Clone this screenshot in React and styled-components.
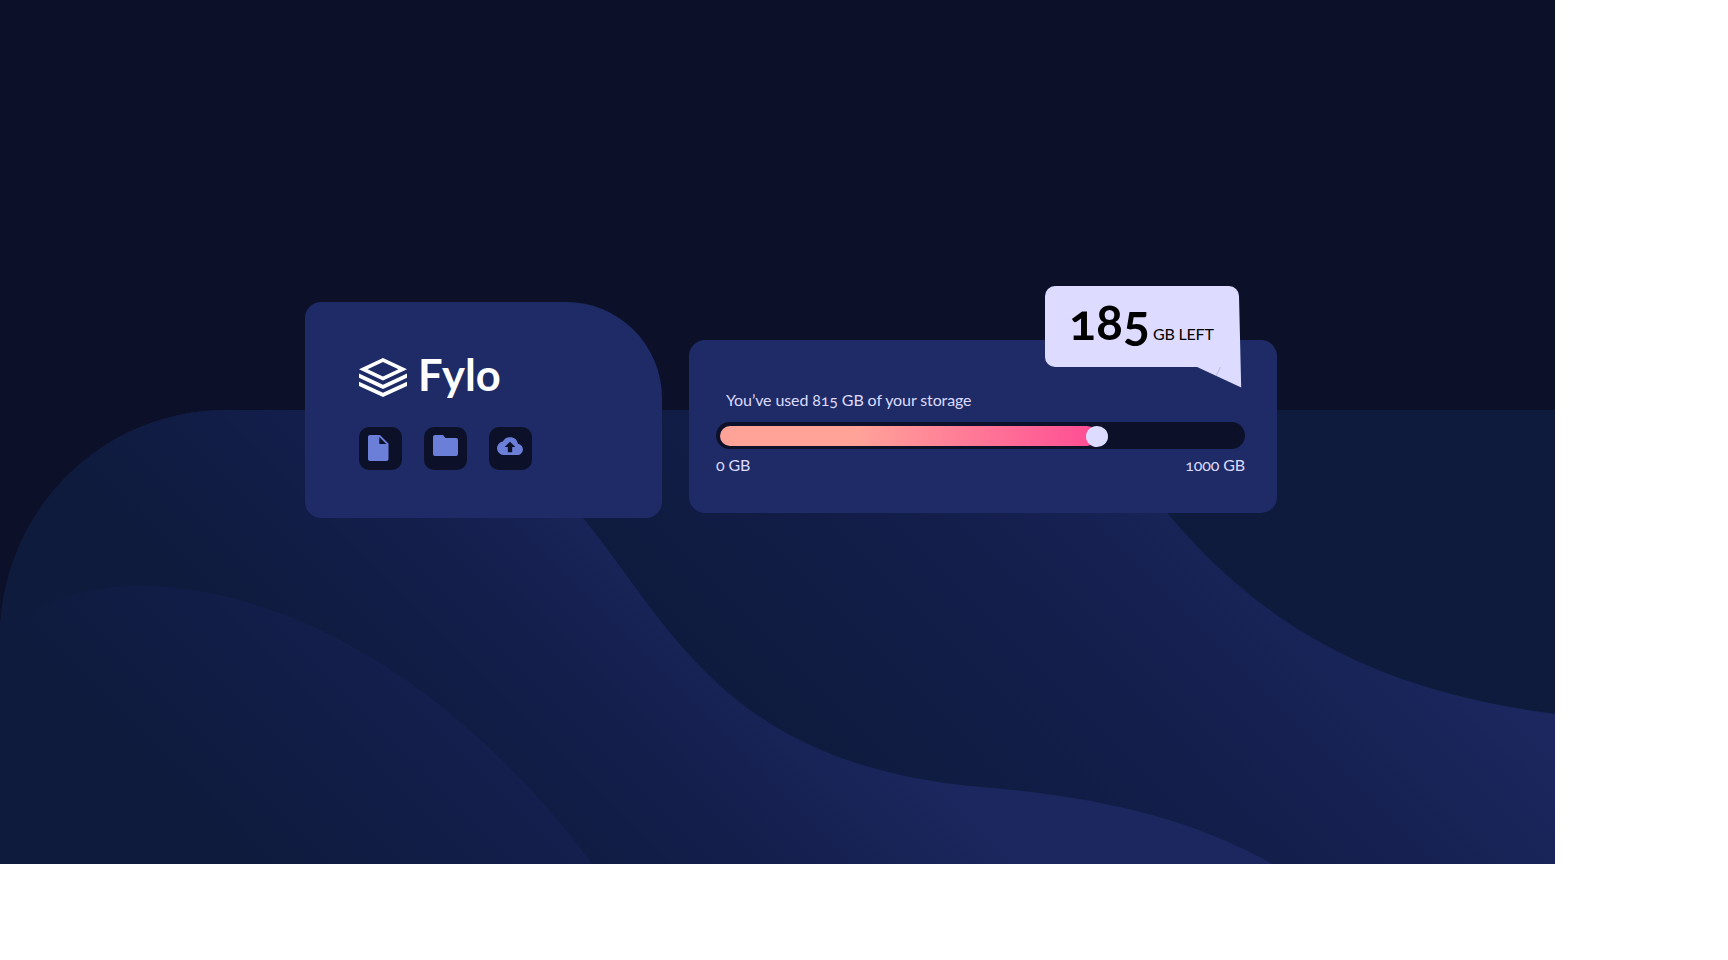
import React from 'react';
import styled, { createGlobalStyle } from 'styled-components';

const GlobalStyle = createGlobalStyle`
  * { box-sizing: border-box; }
  body { margin: 0; background: #fff; }
`;

const Page = styled.div`
  position: relative;
  width: 1555px;
  height: 864px;
  overflow: hidden;
  background: #0c1129;
  font-family: 'Lato', sans-serif;
  font-variant-numeric: oldstyle-nums;
  font-size: 16px;
  line-height: 20px;
  color: #dddbff;
`;

const Waves = styled.svg`
  position: absolute;
  left: 0;
  bottom: 0;
  width: 1555px;
  height: 454px;
`;

const Main = styled.main`
  position: relative;
  display: flex;
  align-items: flex-start;
  gap: 27px;
  padding: 302px 0 0 305px;
`;

const Card = styled.section`
  width: 357px;
  height: 216px;
  padding: 54px;
  border-radius: 16px 96px 16px 16px;
  background: #1e2b66;
`;

const Logo = styled.div`
  display: flex;
  align-items: flex-start;
  gap: 11px;
  height: 71px;
  padding-top: 2px;
`;

const LogoName = styled.span`
  margin-top: -6px;
  font-size: 43.5px;
  font-weight: 700;
  line-height: 44px;
  color: #fff;
`;

const Actions = styled.div`
  display: flex;
  gap: 22px;
`;

const Action = styled.button`
  display: flex;
  align-items: flex-start;
  width: 43px;
  height: 43px;
  padding: ${(p) => p.$pad};
  border: 0;
  border-radius: 10px;
  background: #0c1129;
  svg { display: block; flex: none; fill: #6c7fd8; }
`;

const Storage = styled.section`
  position: relative;
  width: 588px;
  height: 173px;
  margin-top: 38px;
  padding: 50px 32px 0 27px;
  border-radius: 16px;
  background: #1e2b66;
`;

const Usage = styled.p`
  margin: 0 0 12px 10px;
  white-space: nowrap;
  letter-spacing: -0.11px;
`;

const Track = styled.div`
  display: flex;
  align-items: center;
  height: 27px;
  padding: 0 4px;
  border-radius: 14px;
  background: #0c1129;
`;

const Fill = styled.div`
  flex: none;
  width: 377px;
  height: 20px;
  border-radius: 10px;
  background: linear-gradient(90deg, #ffa399 36%, #ff4c94);
`;

const Knob = styled.div`
  flex: none;
  width: 22px;
  height: 21px;
  margin: 1px 0 0 -11px;
  border-radius: 50%;
  background: #dddbff;
`;

const Scale = styled.div`
  display: flex;
  justify-content: space-between;
  margin-top: 6px;
  letter-spacing: -0.12px;
`;

const Bubble = styled.div`
  position: absolute;
  top: -54px;
  left: 356px;
  display: flex;
  align-items: baseline;
  gap: 3px;
  width: 194px;
  height: 81px;
  padding: 4px 0 0 24px;
  border-radius: 10px;
  background: #dddbff;
  color: #000;
`;

const Amount = styled.strong`
  font-size: 50px;
  line-height: 62px;
  font-weight: 700;
`;

const Unit = styled.span`
  white-space: nowrap;
  letter-spacing: -0.2px;
`;

const Tail = styled.svg`
  position: absolute;
  left: 151px;
  top: 10px;
  width: 46px;
  height: 92px;
`;

const icons = [
  { name: 'Document', pad: '8px 9px', w: 21, h: 26, d: 'M2 0H12L20.5 8.5V24a2 2 0 0 1-2 2H2a2 2 0 0 1-2-2V2a2 2 0 0 1 2-2ZM11.3 2V9H18.3Z' },
  { name: 'Folder', pad: '8px 9px', w: 25, h: 21, d: 'M2 0H10L12.5 3H23a2 2 0 0 1 2 2V19a2 2 0 0 1-2 2H2a2 2 0 0 1-2-2V2a2 2 0 0 1 2-2Z' },
  { name: 'Upload', pad: '10px 8px', w: 26, h: 18, d: 'M20.97 6.82A8.13 8.13 0 0 0 5.82 4.55A6.76 6.76 0 0 0 6.5 18H19.5A5.63 5.63 0 0 0 20.97 6.82ZM15.17 10V15.2H10.83V10H7.6L13 4.8L18.4 10Z' },
];

const gradients = [
  { id: 'far', x1: 540, y1: 520, x2: 935, y2: 125 },
  { id: 'mid', x1: 190, y1: 590, x2: 470, y2: 310 },
  { id: 'near', x1: 0, y1: 620, x2: 310, y2: 310 },
];

export default function App() {
  return (
    <>
      <GlobalStyle />
      <Page>
        <Waves viewBox="0 410 1555 454">
          <defs>
            {gradients.map((g) => (
              <linearGradient key={g.id} gradientUnits="userSpaceOnUse" {...g}>
                <stop offset="0" stopColor="#0e1b3d" />
                <stop offset="0.5" stopColor="#131e4b" />
                <stop offset="1" stopColor="#1b275e" />
              </linearGradient>
            ))}
            <clipPath id="edge"><path d="M0 638A226 228 0 0 1 226 410H1555V864H0Z" /></clipPath>
          </defs>
          <g clipPath="url(#edge)">
            <path fill="#0e1b3c" d="M0 410H1555V864H0Z" />
            <path fill="url(#far)" d="M0 410H1090C1115 445 1135 475 1167 513C1260 623 1370 690 1555 714V864H0Z" />
            <path fill="url(#mid)" d="M0 410H470C530 450 552 479 583 518C672 627 725 765 981 787C1100 797 1190 818 1272 864H0Z" />
            <path fill="url(#near)" d="M0 631C40 600 88 586 138 586C310 586 480 712 592 864H0Z" />
          </g>
        </Waves>
        <Main>
          <Card>
            <Logo>
              <svg width="48" height="39" viewBox="0 0 48 39" fill="#fff">
                <path fillRule="evenodd" d="M24 0L48 11.2L24 22.6L0 11.2ZM24 4.1L8.6 11.2L24 18.4L39.4 11.2Z" />
                <path d="M0 15.6L24 26.7L48 15.6V19.8L24 30.9L0 19.8ZM0 23.8L24 34.8L48 23.8V28L24 39L0 28Z" />
              </svg>
              <LogoName>Fylo</LogoName>
            </Logo>
            <Actions>
              {icons.map((i) => (
                <Action key={i.name} aria-label={i.name} $pad={i.pad}>
                  <svg width={i.w} height={i.h} viewBox={`0 0 ${i.w} ${i.h}`}><path fillRule="evenodd" d={i.d} /></svg>
                </Action>
              ))}
            </Actions>
          </Card>
          <Storage>
            <Usage>You’ve used 815 GB of your storage</Usage>
            <Track>
              <Fill />
              <Knob />
            </Track>
            <Scale><span>0 GB</span><span>1000 GB</span></Scale>
            <Bubble>
              <Tail viewBox="0 0 46 92">
                <path fill="#dddbff" d="M43 0L45.2 91.5L0 70.5V60H43Z" />
                <path stroke="#aaa9c9" strokeWidth="0.7" d="M24.5 71L20 80" />
              </Tail>
              <Amount>185</Amount>
              <Unit>GB LEFT</Unit>
            </Bubble>
          </Storage>
        </Main>
      </Page>
    </>
  );
}
